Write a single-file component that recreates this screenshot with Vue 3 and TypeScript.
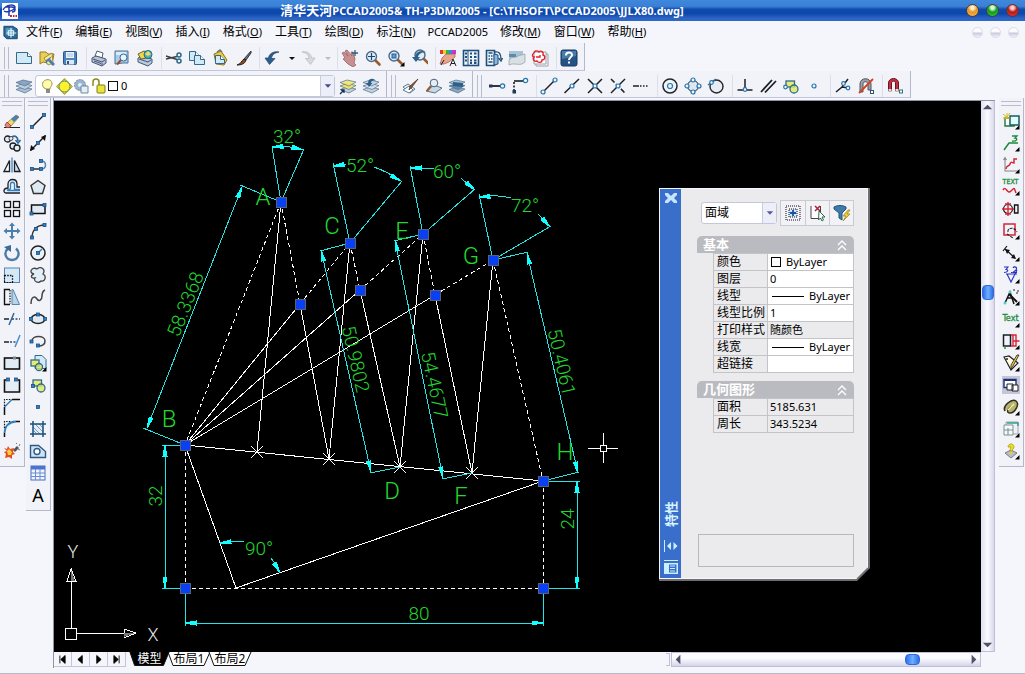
<script setup lang="ts">
import { ref } from 'vue'

interface Tool { id: string; label: string; sep?: boolean; narrow?: boolean }
type Pt = [number, number]

const menus = [
  { text: '文件', key: 'F' }, { text: '编辑', key: 'E' }, { text: '视图', key: 'V' },
  { text: '插入', key: 'I' }, { text: '格式', key: 'O' }, { text: '工具', key: 'T' },
  { text: '绘图', key: 'D' }, { text: '标注', key: 'N' }, { text: 'PCCAD2005', key: '' },
  { text: '修改', key: 'M' }, { text: '窗口', key: 'W' }, { text: '帮助', key: 'H' },
]

const node = (x: number, y: number) => `<rect x="${x - 1.5}" y="${y - 1.5}" width="3" height="3" fill="#2f7fc0" stroke="#1d4f86" stroke-width=".8"/>`
const ring = (x: number, y: number, r = 2) => `<circle cx="${x}" cy="${y}" r="${r}" fill="#eaf6ff" stroke="#2a74a8" stroke-width="1.2"/>`
const ln = (d: string, c = '#1b1f26', w = 1.5, extra = '') => `<path d="${d}" fill="none" stroke="${c}" stroke-width="${w}" ${extra}/>`
const corner = '<path d="M17.5 13v4.500h-4.500z" fill="#000"/>'
const lens = (x: number, y: number) => `<path d="M${x + 3} ${y + 3}l5 5" stroke="#9b5a2c" stroke-width="2.600" stroke-linecap="round"/><circle cx="${x}" cy="${y}" r="5" fill="#dcecf8" stroke="#4a6a88" stroke-width="1.400"/>`
const layers = (a: string, b: string, c: string) =>
  `<path d="M1 12.500l7-2.500 9 2-7 4z" fill="${a}" stroke="#51708e" stroke-width=".7"/><path d="M1 9l7-2.500 9 2-7 4z" fill="${b}" stroke="#51708e" stroke-width=".7"/><path d="M1 5.500l7-2.500 9 2-7 4z" fill="${c}" stroke="#51708e" stroke-width=".7"/>`
const page = (x: number, y: number, w: number, h: number) =>
  `<path d="M${x} ${y}h${w - 4}l4 4v${h - 4}h-${w}z" fill="#d3e9f6" stroke="#33698f"/><path d="M${x + w - 4} ${y}v4h4" fill="#fff" stroke="#33698f"/>`
const regionShape = '<rect x="4" y="4" width="8.500" height="6" fill="#e2ee72" stroke="#33698f" stroke-width="1.300"/><circle cx="12" cy="12" r="4" fill="#d8e860" fill-opacity=".8" stroke="#33698f" stroke-width="1.300"/>'
const word = (s: string, y: number, size: number) =>
  `<text x="8.500" y="${y}" text-anchor="middle" font-family="DejaVu Sans Condensed, sans-serif" font-size="${size}" fill="#1d8a3a" stroke="#1d8a3a" stroke-width=".3">${s}</text>`

const icons: Record<string, string> = {
  new: page(1.5, 3.5, 15, 11),
  open: '<path d="M2 3h6l2 2h6l-2 10-9-2-3 2z" fill="#e8cf58" stroke="#9b7b20"/><path d="M6 9l8-5 1 10-5 2z" fill="#f9eb96" stroke="#8a6d1c" stroke-width=".7"/><path d="M8 11l6-4-2 3 5 5-2 2-5-5-2 3z" fill="#4c7fae"/>',
  save: '<rect x="2.500" y="2.500" width="13" height="13" rx="1" fill="#4f83bb" stroke="#2d5588"/><rect x="5" y="3" width="8" height="6" fill="#e9f3fb"/><path d="M6 5h6M6 7h6" stroke="#8fb4d4" stroke-width=".8"/><rect x="5" y="11" width="8" height="4.500" fill="#dbe8f2"/><rect x="6" y="12" width="2" height="3" fill="#2d5588"/>',
  print: '<path d="M5 7l2-5 6 2-1 5z" fill="#fff" stroke="#4b5b77"/><path d="M2 9l4-2 10 3v4l-4 3-10-4z" fill="#b8c4da" stroke="#46556f"/><path d="M3 10l9 3 3-2M4 12l7 2.500" fill="none" stroke="#46556f"/><path d="M12 14v2.500" stroke="#46556f"/>',
  preview: '<path d="M2 2h13v12h-5l-8 1z" fill="#a7cdec" stroke="#4a7298"/><path d="M3 3h10v3h-10z" fill="#d9edfa"/><path d="M8 11l-4 4.500" stroke="#9b4a2c" stroke-width="2"/><circle cx="10.500" cy="8.500" r="3.500" fill="#e8f5fd" stroke="#3c6288"/>',
  publish: '<path d="M2 9l4-2 10 3v4l-4 3-10-4z" fill="#bac9de" stroke="#40577a"/><path d="M3 10l9 3 3-2" fill="none" stroke="#40577a"/><path d="M2 5l6-3 4 2-1 5-6 1z" fill="#f0d94e" stroke="#6b6320"/><circle cx="12" cy="5.500" r="4" fill="#5bb0b9" stroke="#206878"/><path d="M9 5l3-3 3 3-3 2z" fill="#eadf66"/>',
  cut: ln('M1 7l11 3.500M1 10l11-2.500', '#3b4148', 1.4) + '<circle cx="14" cy="6" r="2" fill="none" stroke="#2e6588" stroke-width="1.500"/><circle cx="14" cy="12" r="2" fill="none" stroke="#2e6588" stroke-width="1.500"/>',
  copy: page(1.5, 2.5, 10, 9) + page(6.500, 6.500, 10, 9),
  paste: '<path d="M3 5l7-3 6 9-3 5-8-1z" fill="#e9c93a" stroke="#8e731a"/><path d="M6 3l3-2 2 2" fill="none" stroke="#777" stroke-width="1.500"/>' + page(4.500, 6.500, 9, 8),
  brush: '<path d="M17 2l-7 8 2 1 5-7z" fill="#6b6f78" stroke="#2f3238"/><path d="M10 10l2 1c-1 4-5 5-9 5 4-1 4-4 7-6z" fill="#8b4a22" stroke="#2b1c12"/>',
  undo: '<path d="M16 3C10 2 6 5 5.500 9H2l4.500 6.500L12 9.500H8.500C9 6 11 4 16 3z" fill="#2d5f8b" stroke="#1d4468" stroke-width=".7"/>',
  redo: '<path d="M3 3c6-1 9 2 9.500 6H16l-4.500 6.500L6.500 9.500H10C9.500 6 8 4 3 3z" fill="#d6d9e0" stroke="#b3b7c2" stroke-width=".7"/>',
  down: '<path d="M6 8h6l-3 3z" fill="#111"/>',
  downg: '<path d="M6 8h6l-3 3z" fill="#b8bbc8"/>',
  pan: '<path d="M1 4l2-1 4 4-3-5 2-1 5 6-1-4 2 0 2 7-1 4 2 2-3 2-5-3-5-5 2-1z" fill="#c98e8e" stroke="#8b5a62" stroke-width=".7"/><path d="M14 1v6M11 4h6" stroke="#345d86" stroke-width="1.300"/>',
  zoom: lens(7.500, 7.500) + ln('M4 7.500h7M7.500 4v7', '#1c4470', 1.2),
  zoomwin: lens(7, 7) + '<rect x="5" y="5" width="4" height="4" fill="#5d9ccc" stroke="#2c6192"/>' + corner,
  zoomprev: lens(10, 6) + '<path d="M16 3C10 0 5 4 5 8H2l4 5 4-5H8c0-2 3-5 8-5z" fill="#2f6088"/>',
  props: '<path d="M1 1h3v4h-3z" fill="#e33"/><path d="M4 1h3v4h-3z" fill="#ec3"/><path d="M7 1h3v4h-3z" fill="#3b3"/><path d="M10 1h3v4h-3z" fill="#38e"/><path d="M13 1h4v4h-4z" fill="#c3c"/><path d="M3 9l4-4h9v3l-6 5-5 2H1z" fill="#e9a48e" stroke="#9c594c" stroke-width=".7"/><path d="M2 16l3-5M11 17l3-7 3 7M12 14.500h4" fill="none" stroke="#222"/>',
  design: '<rect x="1.500" y="1.500" width="15" height="15" fill="#eef6fc" stroke="#214f7c" stroke-width="1.600"/><path d="M6 2v14" stroke="#214f7c"/><path d="M3 4.500h2M3 8h2M3 11.500h2M8 4.500h2M12 4.500h2.500M8 8h2M12 8h2.500M8 11.500h2M12 11.500h2.500M8 14h2M12 14h2.500" stroke="#214f7c" stroke-width="1.800"/>',
  palette: '<path d="M1.500 1.500h8v15h-8z" fill="#eef6fc" stroke="#214f7c" stroke-width="1.600"/><path d="M9 5l4 1v9l-4 1z" fill="#8db6da" stroke="#214f7c"/><path d="M3.500 4h4M3.500 7h1.500M6 7h1.500M3.500 10h1.500M6 10h1.500M3.500 13h4" stroke="#214f7c" stroke-width="1.500"/>' + ln('M10 3c4-1 6 2 6 7M13.500 9l2.500 3 1.500-3', '#214f7c', 1.3),
  sheet: '<path d="M1 2h14v9l-8 2H1z" fill="#a9c3d6"/><path d="M1 5h7v3H1z" fill="#5e89ab"/><path d="M1 12c2-6 6-2 9-5 2-1 4-1 7-2v8c-5 5-10 0-16 3z" fill="#d8e0e4" stroke="#8c9ba6" stroke-width=".7"/>',
  markup: '<path d="M5 5h12v12H5z" fill="#f7f7fa" stroke="#9aa0ac"/><path d="M3 3h12v12H3z" fill="#fff" stroke="#9aa0ac"/>' + ln('M3 4c-3 2-1 4 0 4-2 3 1 5 3 4 1 2 5 2 5-1 3 0 4-4 1-5 1-3-2-5-4-3-2-2-5-1-5 1zM5 8h4V6', '#e0242c', 1.4),
  help: '<rect x="1" y="1" width="16" height="16" rx="2" fill="#245384" stroke="#173a60"/><path d="M2 2h14v5l-14 3z" fill="#4a7dac"/><path d="M6 6.500c0-4 6-4 6-.500 0 2.500-3 2-3 5M9 12.500v2" fill="none" stroke="#fff" stroke-width="2"/>',
  layers: layers('#a9bfd4', '#bccede', '#8ba5bf'),
  laycur: layers('#bfd0e0', '#efe164', '#efe680') + '<path d="M1 17l4-4M2 13h3v3" fill="none" stroke="#12305a" stroke-width="1.300"/>',
  layprev: layers('#bfd0e0', '#d5e0ea', '#c6d5e3') + '<path d="M14 4C11 0 6 2 6 6H4l3 4 3.500-4H9c0-2 2-3 5-2z" fill="#2f6088"/>',
  laymatch: '<path d="M1 10l5-3 7 5-5 4z" fill="#eaf2f8" stroke="#5c7b96"/><path d="M1 13l6-4 4 4-4 3z" fill="#fff" stroke="#5c7b96"/><path d="M16 2l-6 8-3 3 1-4z" fill="#8c5d38" stroke="#3c2b1e" stroke-width=".7"/>',
  layfind: '<path d="M1 14l8-6 8 3-7 5z" fill="#c6d7e5" stroke="#59768f"/><path d="M6 9l-4 5" stroke="#9b5a2c" stroke-width="2.200"/><circle cx="9" cy="6" r="3.800" fill="#e2eef8" stroke="#4a5f78"/>',
  laytool: layers('#8aa6c0', '#6189ad', '#a9c3da') + '<path d="M5 5l10 1v4l-10-1z" fill="#2f6088"/>',
  track: ln('M3 9h9', '#1b1f26', 1.8) + '<rect x="1" y="7.500" width="3.500" height="3" fill="#1d3b58"/>' + ring(14.500, 9, 2.2),
  from: ln('M3 4h10', '#1b1f26', 1.6) + ln('M3 5v9', '#1b1f26', 1.6, 'stroke-dasharray="2 1.500"') + '<rect x="1.500" y="13" width="3.500" height="3.500" fill="#1d3b58"/>' + ring(14.500, 3.500, 2.2),
  endp: ln('M3 15L15 3') + ring(3, 15) + ring(15, 3),
  midp: ln('M1.500 16L16 2') + ring(9, 9),
  inter: ln('M2 2l14 14M16 2L2 16') + ring(9, 9),
  appint: ln('M2 2l14 14', '#1b1f26', 1.5, 'stroke-dasharray="5 2"') + ln('M16 2L2 16') + ring(9, 9),
  exten: ln('M1 9h6') + ln('M8 9h9', '#1b1f26', 1.5, 'stroke-dasharray="1.500 1.500"'),
  center: '<circle cx="9" cy="9" r="7" fill="#eef3f7" stroke="#20262d" stroke-width="1.500"/>' + ring(9, 9, 2.5),
  quad: '<circle cx="9" cy="9" r="5.500" fill="#dbe7f2" stroke="#20262d"/>' + ring(9, 3) + ring(9, 15) + ring(3, 9) + ring(15, 9),
  tan: '<circle cx="9.500" cy="9.500" r="6.500" fill="#e7edf2" stroke="#20262d" stroke-width="1.400"/>' + ln('M1 8l8-6', '#2a74a8', 1.4) + ring(4.500, 5.500, 1.8),
  perp: ln('M9 2v9M1.500 13h15') + ring(9, 12.500, 1.8),
  para: ln('M2 15L13 3M6 15.500L17 4', '#1b1f26', 1.8),
  insert: regionShape + ring(3.500, 10, 1.8),
  nodep: ring(9, 9, 2),
  near: ln('M2 15l6-5 6-8M8 10l7 1') + ring(9.500, 6.500, 1.8) + ring(14, 11, 1.8),
  none: '<path d="M3 15V7c0-7 11-7 11 0v6h-3V7c0-3-5-3-5 0v8z" fill="#9a9ea8" stroke="#555"/>' + ln('M2 16L16 2', '#d04020', 1.8) + '<rect x="13.500" y="13.500" width="3" height="3" fill="#fff" stroke="#356"/>',
  osnap: '<path d="M2.500 14V6c0-6 10-6 10 0v8h-3V6c0-2.500-4-2.500-4 0v8z" fill="#c03040" stroke="#6e1420"/><path d="M2.500 12h3v2.500h-3zM9.500 12h3v2.500h-3z" fill="#ddd"/><rect x="13.500" y="13" width="3" height="3" fill="#fff" stroke="#2a7480"/>',
  erase: '<path d="M1 15.500h16" stroke="#222"/><path d="M4 11L13 3l3 2-8 9z" fill="#eddc6a" stroke="#8c7820" stroke-width=".8"/><path d="M8 7l5-4 3 2-5 5z" fill="#4e7fb0"/><path d="M4 10l4 4-2 1.500H3.500L2 13z" fill="#e8837e" stroke="#8c3b3b" stroke-width=".8"/>',
  dup: '<circle cx="4.500" cy="5" r="3" fill="#e4edf5" stroke="#1b1f26" stroke-width="1.300"/><circle cx="10" cy="12" r="3" fill="#e4edf5" stroke="#1b1f26" stroke-width="1.300"/><circle cx="14" cy="14" r="3" fill="#e4edf5" stroke="#1b1f26" stroke-width="1.300"/><circle cx="8" cy="4.500" r="2" fill="#e4edf5" stroke="#444"/>' + ln('M9 3c3-2 6 0 6 4M12.500 6l2.500 3 2.500-3', '#2f6799', 1.6),
  mirror: '<path d="M1 15.500h5.500v-11z" fill="#fff" stroke="#1b1f26" stroke-width="1.300"/><path d="M17 15.500h-5.500v-11z" fill="#cfe0ee" stroke="#1b1f26" stroke-width="1.300"/><path d="M9 1.500v15" stroke="#2f7fc0" stroke-width="1.200"/>',
  offset: ln('M17 15H3c-3 0-3-5 2-5V6c0-6 9-6 9 0v3h3', '#1b1f26', 1.3) + ln('M17 12.500H5c-1 0-1-1 1-1 2 0 1.500-2 1.500-5 0-3 4-3 4 0v5h5.500', '#2f7fc0', 1.3),
  array: '<g fill="#eef5fb" stroke="#111" stroke-width="1.300"><rect x="1.500" y="1.500" width="6" height="6"/><rect x="10.500" y="1.500" width="6" height="6"/><rect x="1.500" y="10.500" width="6" height="6"/><rect x="10.500" y="10.500" width="6" height="6"/></g>',
  move: '<path d="M9 .5l3 3.500h-2v4h4V6l3.500 3-3.500 3v-2h-4v4h2l-3 3.500L6 14h2v-4H4v2L.5 9 4 6v2h4V4H6z" fill="#4a7fae"/>',
  rotate: ln('M5 4.500C0 9 3 16 9 16s9-7 4-11.500', '#4c7ca4', 2.4) + '<path d="M1 3l7-2v7z" fill="#3c6c96"/>',
  scale: '<rect x="1.500" y="2" width="15" height="14.500" fill="#d5e8f6" stroke="#5586b0"/>' + ln('M1.500 9.500h8v7', '#111', 1.3, 'stroke-dasharray="1.500 1.200"') + ln('M1.500 9v8M1 16.500h9', '#111', 1.2, 'stroke-dasharray="1.500 1.200"'),
  stretch: '<path d="M9 1.500h1l6.500 15H9z" fill="#b9d3e8" stroke="#5586b0"/>' + ln('M7 1.500H1.500v15H7', '#111', 1.4) + ln('M7 2v14', '#111', 1.2, 'stroke-dasharray="1.500 1.200"'),
  trim: ln('M1 9h5') + ln('M9 9h8', '#2a4a70', 1.3, 'stroke-dasharray="2 1.500"') + ln('M6 15l5-12', '#2f6799', 1.5),
  extend: ln('M1 10h5') + ln('M7 10h6', '#2a4a70', 1.3, 'stroke-dasharray="2 1.500"') + ln('M12 15l5-12', '#4a8ccc', 1.5),
  breakpt: '<rect x="1.500" y="4" width="15" height="11" fill="#e0ecf5" stroke="#111" stroke-width="1.600"/><rect x="10" y="2.500" width="3" height="3" fill="#7a8796"/>',
  breakk: '<rect x="3" y="5" width="12" height="10" fill="#e3eef6"/>' + ln('M3 4H1.500v12h15V4H15', '#111', 1.6) + node(5, 3.500) + node(13, 3.500),
  chamfer: ln('M1.500 17V9M9 1.500h8', '#111', 1.5) + ln('M1.500 9l7.500-7.500', '#2f7fc0', 1.5) + ln('M1.500 8V1.500H8', '#111', 1.2, 'stroke-dasharray="1.500 1.200"'),
  fillet: ln('M1.500 17v-4M13 1.500h4', '#111', 1.5) + ln('M1.500 13C2 6 6 2 13 1.500', '#2f7fc0', 1.8) + ln('M1.500 8V1.500H8', '#111', 1.2, 'stroke-dasharray="1.500 1.200"'),
  explode: '<path d="M10 8l4-4 2 2-4 4z" fill="#555"/><path d="M1 6l3 1 1-3 2 3 4-1-1 4 2 2-3 1v4l-3-2-4 1 1-4-2-2 3-1z" fill="#e94b22"/><path d="M4 9l2-2 3 3-1 3-3 0z" fill="#f8d23c"/><path d="M13 2l1-1M16 4l1-2M15 7l2 1" stroke="#777"/>',
  line: ln('M3 15L15 3') + node(3, 15) + node(15, 3),
  xline: ln('M1.500 16.500L16.500 1.500') + '<path d="M1 17l1-6 4 4zM17 1l-1 6-4-4z" fill="#111"/>' + node(9, 9),
  pline: ln('M3 13h9', '#1b1f26', 1.4) + ln('M12 5c6 0 6 8 0 8', '#4c86b6', 1.5) + node(3, 13) + node(12, 5) + node(12, 13),
  polygon: '<path d="M9 2.500l7 5-2.500 8h-9l-2.500-8z" fill="#dfe9f2" stroke="#333" stroke-width="1.400"/>',
  rect: '<rect x="2.500" y="5" width="13.500" height="8.500" fill="#e0eaf4" stroke="#111" stroke-width="1.500"/>' + node(2.500, 13.500) + node(15.500, 5),
  arc: ln('M3 15.500C3 8 8 3 15.500 3', '#333', 1.4) + node(3, 15.500) + node(7, 7) + node(15.500, 3),
  circle: '<circle cx="9" cy="9" r="7" fill="#eaf2f9" stroke="#222" stroke-width="1.500"/>' + ln('M9 9l4-4', '#2f7fc0') + node(9, 9),
  revcloud: '<path d="M5 8C-1 7 3 0 8 3c4-3 9 0 6 5 4 2 2 8-2 7-3 3-8 0-6-3-4 1-5-3-1-4z" fill="#e2eef8" stroke="#444" stroke-width="1.300"/>',
  spline: ln('M2 16c0-8 4-8 6-5s5 1 5-3 1-5 3-6', '#444', 1.5),
  ellipse: '<ellipse cx="9" cy="9" rx="7" ry="4.500" fill="#dfe9f3" stroke="#222" stroke-width="1.400"/>' + node(2, 9) + node(16, 9) + node(9, 4.500),
  earc: ln('M3 9C3 3 16 3 16 9c0 4-4 5-7 5', '#444', 1.5) + node(2.500, 9.500) + node(9, 13.500),
  insblk: '<path d="M6 1.500h7l4 4v9H6z" fill="#d3e9f6" stroke="#33698f"/><rect x="2" y="6" width="8" height="6" fill="#e2ee72" stroke="#33698f" stroke-width="1.300"/><circle cx="10" cy="13" r="3.500" fill="#d8e860" fill-opacity=".8" stroke="#33698f" stroke-width="1.300"/>' + corner,
  block: regionShape + node(4, 10),
  point: node(9, 9),
  hatch: '<path d="M4 4h10v10H4z" fill="#e4eef6"/>' + ln('M4 7l7 7M4 10l4 4M6 4l8 8M10 4l4 4', '#5586b0', .8) + ln('M4 1v16M14 1v16M1 4h16M1 14h16', '#1d4f78', 1.5),
  region: '<path d="M1.500 3.500h8l7 6v6h-15z" fill="#cfe3f2" stroke="#2d5a88" stroke-width="1.400"/><circle cx="8" cy="9.500" r="3" fill="#fff" stroke="#2d5a88" stroke-width="1.400"/>',
  table: '<rect x="2" y="2" width="14" height="14" fill="#eff5ff" stroke="#4a6fc0"/><path d="M2 2h14v3.500H2z" fill="#4a74cf"/>' + ln('M2 9h14M2 12.500h14M6.500 5v11M11 5v11', '#6b8dd0', 1),
  r1: '<path d="M3 6h9v8H3z" fill="#fff" stroke="#1d7a3a" stroke-width="1.400"/><path d="M8 4h9v9H8z" fill="#dff" stroke="#1d5a5c" stroke-width="1.500"/><path d="M1 2l6 5M5 1v6M1 6h7M8 1L3 7" stroke="#d8b820"/>' + corner,
  r2: ln('M2 16l5-7h9', '#1d8a3a', 1.5) + ln('M10 2h5l-2 2c3 0 2 4-3 3', '#1d8a3a', 1.3) + corner,
  r3: ln('M3 2v13h13M1.500 4L3 1.500 4.500 4', '#888', 1.1) + ln('M4 13c0-4 3-2 4-5s2-1 4-1V3h3', '#d82436', 1.5) + corner,
  r4: word('TEXT', 6, 7) + ln('M1 12c3-5 4 5 8 1s3-3 5 2', '#d82436', 1.5) + corner,
  r5: '<circle cx="6" cy="9" r="4.500" fill="none" stroke="#111" stroke-width="1.200"/><path d="M12.500 5h3.500v8h-3.500z" fill="none" stroke="#111" stroke-width="1.300"/>' + ln('M0 9h12M6 2v14M3 4h6M3 14h6', '#d82436', 1.4),
  r6: '<rect x="2" y="2" width="11" height="11" fill="none" stroke="#d82436" stroke-width="1.500"/>' + ln('M6 10c-1-4 6-6 9 0M5 12l6 4', '#222', 1.1, 'stroke-dasharray="3 1"') + corner,
  r7: ln('M3 5l10 9M1 7l4-5', '#111', 1.2) + '<path d="M3 5l5 1-3 4zM14 15l-5-1 3-4z" fill="#111"/>' + corner,
  r8: ln('M4 8h11M5 8l4 8 6-12M2 1h4l-2 2.500c3 0 2 3-2 3M9 6.500h1M11 2c1-2 5-1 3 2l-3 2.500h4', '#2430c0', 1.1) + corner,
  r9: ln('M3 15l5-11 4 12M5 10h6', '#111', 1.5) + ln('M7 6l8 8', '#111', 2) + '<circle cx="3" cy="15" r="1.500" fill="#5cc"/><circle cx="8" cy="4" r="1.500" fill="#5cc"/><path d="M12 1v2M16 2v2M14 5h2" stroke="#222"/>' + corner,
  r10: word('Text', 11, 9) + corner,
  r11: ln('M1.500 3h7v11h-7z') + ln('M9 3h5v11H9M11 3v11M11 9h6.500', '#d82436', 1.4) + ln('M3 14v3', '#1d8a3a', 1.4) + corner,
  r12: '<path d="M2 3l5-1 9 7-7 7z" fill="#fffbe8" stroke="#222" stroke-width="1.200"/><path d="M17 1l-6 11-2 3 0-4 6-10z" fill="#e9c93a" stroke="#222" stroke-width=".8"/><circle cx="5" cy="5" r="1" fill="#222"/>' + corner,
  r13: '<rect x="0" y="0" width="18" height="18" fill="#c2c6da"/><path d="M2 3.500h12v8H2z" fill="#fff" stroke="#223070" stroke-width="1.400"/><path d="M5 8h6v6H5zM10 9h6v6h-6z" fill="#fff" stroke="#222"/>' + ln('M2 4h12', '#223070', 2),
  r14: '<path d="M3 13C0 8 10 0 14 3s-1 12-6 12c-3 0-4-3 2-7" fill="#b9b46c" stroke="#2d2d22" stroke-width="1.500"/><path d="M6 12l6-6" stroke="#f4f0b0" stroke-width="1.500"/>' + corner,
  r15: '<path d="M4 2h12v12H4z" fill="#eef2f4" stroke="#9aa4aa"/><path d="M2 5h9v10H2z" fill="#f8fafa" stroke="#7d9096"/>' + ln('M5 3h11v3', '#3a9c90', 1.5) + ln('M2 10h9M6 8v7', '#7d9096', 1.1) + corner,
  r16: '<path d="M3 11l6-3 6 3-6 5z" fill="#b7bcc8" stroke="#767c8c"/><path d="M6 5c0-4 6-4 6 0 0 2-2 2-2 4H8c0-3 1-3 1-4z" fill="#f0e020" stroke="#a89a10" stroke-width=".8"/><circle cx="9" cy="11" r="1.300" fill="#e6d820"/>' + corner,
  selall: '<rect x="2" y="2" width="14" height="14" fill="none" stroke="#111" stroke-dasharray="1 1"/><rect x="5" y="5" width="8" height="8" fill="#cfe6f8" stroke="#111" stroke-dasharray="1 1"/>' + ln('M9 6v6M6 9h6', '#1d4fa8', 1.8),
  selobj: '<path d="M2 2.500h9v12H2z" fill="#fff"/>' + ln('M2 2v12.500h12M11.500 2v6', '#444', 1) + ln('M6 2l5 5M11 2L6 7', '#b02040', 1.6) + '<path d="M10 7l6 6-3 0 1.500 3-1.500 1-1.500-3-2 2z" fill="#fff" stroke="#2a6a48"/>',
  filter: '<path d="M1 3c3-2 9-2 12 0v2L9 9v7l-3-2V9L1 5z" fill="#3d7ca8" stroke="#225478"/><path d="M15 6l-5 6h3l-3 5 7-7h-3l3-4z" fill="#f2cf38" stroke="#9a7a10" stroke-width=".7"/>',
}

const t = (id: string, label: string, sep = false): Tool => ({ id, label, sep })

const standard: Tool[] = [
  t('new', '新建'), t('open', '打开'), t('save', '保存', true),
  t('print', '打印'), t('preview', '打印预览'), t('publish', '发布', true),
  t('cut', '剪切'), t('copy', '复制'), t('paste', '粘贴'), t('brush', '特性匹配', true),
  t('undo', '放弃'), { id: 'down', label: '放弃列表', narrow: true }, t('redo', '重做'),
  { id: 'downg', label: '重做列表', narrow: true, sep: true },
  t('pan', '实时平移'), t('zoom', '实时缩放'), t('zoomwin', '窗口缩放'), t('zoomprev', '缩放上一个', true),
  t('props', '特性'), t('design', '设计中心'), t('palette', '工具选项板'), t('sheet', '图纸集管理器'), t('markup', '标记集管理器', true),
  t('help', '帮助'),
]
const layerTools = [t('laycur', '将对象的图层置为当前'), t('layprev', '上一个图层')]
const layerExtra = [t('laymatch', '图层匹配'), t('layfind', '图层漫游'), t('laytool', '图层状态')]
const snaps: Tool[] = [
  t('track', '临时追踪点'), t('from', '捕捉自', true),
  t('endp', '端点'), t('midp', '中点'), t('inter', '交点'), t('appint', '外观交点'), t('exten', '延长线', true),
  t('center', '圆心'), t('quad', '象限点'), t('tan', '切点', true),
  t('perp', '垂足'), t('para', '平行线'), t('insert', '插入点'), t('nodep', '节点', true),
  t('near', '最近点'), t('none', '无捕捉', true), t('osnap', '对象捕捉设置'),
]
const modifyTools = [
  t('erase', '删除'), t('dup', '复制对象'), t('mirror', '镜像'), t('offset', '偏移'), t('array', '阵列'), t('move', '移动'),
  t('rotate', '旋转'), t('scale', '缩放'), t('stretch', '拉伸'), t('trim', '修剪'), t('extend', '延伸'), t('breakpt', '打断于点'),
  t('breakk', '打断'), t('chamfer', '倒角'), t('fillet', '圆角'), t('explode', '分解'),
]
const drawTools = [
  t('line', '直线'), t('xline', '构造线'), t('pline', '多段线'), t('polygon', '正多边形'), t('rect', '矩形'), t('arc', '圆弧'),
  t('circle', '圆'), t('revcloud', '修订云线'), t('spline', '样条曲线'), t('ellipse', '椭圆'), t('earc', '椭圆弧'), t('insblk', '插入块'),
  t('block', '创建块'), t('point', '点'), t('hatch', '图案填充'), t('region', '面域'), t('table', '表格'), t('mtext', '多行文字'),
]
const cadTools = [
  t('r1', '图幅'), t('r2', '序号'), t('r3', '坐标'), t('r4', '文字'), t('r5', '轴孔'), t('r6', '视图'), t('r7', '标注'), t('r8', '粗糙度'),
  t('r9', '构造'), t('r10', '文本'), t('r11', '零件'), t('r12', '编辑'), t('r13', '图库'), t('r14', '附件'), t('r15', '图纸'), t('r16', '提示'),
]

const general = [
  { name: '颜色', value: 'ByLayer', kind: 'swatch' },
  { name: '图层', value: '0', kind: 'input' },
  { name: '线型', value: 'ByLayer', kind: 'line' },
  { name: '线型比例', value: '1', kind: 'input' },
  { name: '打印样式', value: '随颜色', kind: 'locked' },
  { name: '线宽', value: 'ByLayer', kind: 'line' },
  { name: '超链接', value: '', kind: 'input' },
]
const geometry = [
  { name: '面积', value: '5185.631', kind: 'locked' },
  { name: '周长', value: '343.5234', kind: 'locked' },
]
const groups = [{ title: '基本', rows: general }, { title: '几何图形', rows: geometry }]

/* Drawing geometry */
const A: Pt = [281, 202], C: Pt = [350, 243], E: Pt = [423, 234], G: Pt = [493, 260]
const P1: Pt = [300, 304], P2: Pt = [360, 290], P3: Pt = [435, 295]
const B: Pt = [185, 445], H: Pt = [543, 481], BL: Pt = [185, 588], BR: Pt = [543, 588], F: Pt = [236, 588]
const X1: Pt = [257, 452], X2: Pt = [329, 459], X3: Pt = [400, 467], X4: Pt = [472, 473]

const seg = (list: [Pt, Pt][]) => list.map(([p, q]) => `M${p[0]} ${p[1]}L${q[0]} ${q[1]}`).join('')
const solid = seg([[A, X1], [P1, X2], [C, X2], [P2, X3], [E, X3], [P3, X4], [G, X4], [B, P1], [B, P2], [B, P3], [B, H], [B, F], [F, H]])
const dashed = [[A, B], [A, P1], [P1, C], [C, P2], [P2, E], [E, P3], [P3, G], [G, H], [B, BL], [BL, BR], [H, BR]].map(s => seg([s as [Pt, Pt]]))
const grips = [A, C, E, G, P1, P2, P3, B, H, BL, BR]
const crosses = [X1, X2, X3, X4]

const extensions = seg([
  [A, [272, 147]], [A, [304, 149]], [A, [240, 185]], [B, [143, 428]],
  [C, [333, 163]], [C, [402, 181]], [C, [320, 251]], [X3, [370, 473]],
  [E, [410, 166]], [E, [475, 189]], [E, [394, 241]], [X4, [442, 479]],
  [G, [479, 194]], [G, [551, 226]], [G, [528, 252]], [H, [579, 472]],
  [H, [580, 481]], [BR, [580, 588]], [B, [162, 445]], [BL, [162, 588]],
  [BL, [185, 626]], [BR, [543, 626]],
])
const arcs = 'M272 147Q288 145 303 150M333 166L346 164M374 167Q388 172 401 181M410 168L434 168M461 178L474 190M479 197Q496 194 511 198M538 214L550 227M220 543Q232 541 244 542M271 558Q276 564 280 573'
const dims: [Pt, Pt][] = [
  [[242, 187], [147, 428]], [[321, 250], [371, 472]], [[395, 240], [443, 478]], [[527, 253], [578, 473]],
  [[577, 481], [577, 588]], [[165, 445], [165, 588]], [[185, 623], [543, 623]],
]
const arrow = (tip: Pt, from: Pt) => {
  const a = Math.atan2(from[1] - tip[1], from[0] - tip[0])
  const pt = (d: number) => `${tip[0] + 11 * Math.cos(a) + d * Math.sin(a)},${tip[1] + 11 * Math.sin(a) - d * Math.cos(a)}`
  return `${tip[0]},${tip[1]} ${pt(2)} ${pt(-2)}`
}
const arrows = [
  ...dims.flatMap(([p, q]) => [arrow(p, q), arrow(q, p)]),
  arrow([272, 147], [288, 146]), arrow([303, 150], [288, 146]), arrow([333, 166], [346, 164]), arrow([401, 181], [388, 174]),
  arrow([410, 168], [430, 168]), arrow([475, 190], [462, 179]), arrow([479, 197], [495, 196]), arrow([550, 227], [540, 216]),
  arrow([220, 543], [240, 541]), arrow([280, 573], [274, 562]),
]
const dimTexts = [
  { s: '32°', x: 287, y: 136, r: 0 }, { s: '52°', x: 360, y: 165, r: 0 }, { s: '60°', x: 447, y: 171, r: 0 }, { s: '72°', x: 525, y: 205, r: 0 },
  { s: '90°', x: 259, y: 548, r: 0 }, { s: '80', x: 419, y: 613, r: 0 }, { s: '24', x: 567, y: 519, r: -90 }, { s: '32', x: 155, y: 496, r: -90 },
  { s: '58.3368', x: 185, y: 304, r: -68 }, { s: '50.9802', x: 356, y: 359, r: 77 }, { s: '54.4677', x: 435, y: 385, r: 78 }, { s: '50.4061', x: 562, y: 362, r: 77 },
]
const points = [
  { s: 'A', x: 263, y: 196 }, { s: 'C', x: 332, y: 225 }, { s: 'E', x: 402, y: 230 }, { s: 'G', x: 471, y: 255 },
  { s: 'B', x: 169, y: 418 }, { s: 'H', x: 565, y: 451 }, { s: 'D', x: 392, y: 490 }, { s: 'F', x: 461, y: 495 },
]

const tabs = ['模型', '布局1', '布局2']
const current = ref('模型')
const navs = [
  { label: '第一个', d: 'M6 4v9M12 4v9l-5-4.500z' }, { label: '上一个', d: 'M11 4v9l-5-4.500z' },
  { label: '下一个', d: 'M7 4v9l5-4.500z' }, { label: '最后一个', d: 'M12 4v9M6 4v9l5-4.500z' },
]
</script>

<template>
  <div class="app">
    <header class="titlebar">
      <svg class="logo" viewBox="0 0 16 16" aria-hidden="true">
        <rect width="16" height="16" fill="#fff" />
        <path d="M1 7c3-6 12-6 12-3s-8 6-11 4M7 3v10M4 4h6M10 4c4 0 4 5 0 5" fill="none" stroke="#2038b0" stroke-width="1.500" />
        <path d="M8 13h2M11 13h1.500M13.500 13H15" stroke="#d02030" stroke-width="2" />
      </svg>
      <h1><span>清华天河</span>PCCAD2005&amp; TH-P3DM2005 - [C:\THSOFT\PCCAD2005\JJLX80.dwg]</h1>
      <div class="orbs">
        <button class="orb amber" aria-label="最小化"></button>
        <button class="orb green" aria-label="还原"></button>
        <button class="orb red" aria-label="关闭"></button>
      </div>
    </header>

    <nav class="menubar">
      <svg class="docicon" viewBox="0 0 18 16" aria-hidden="true">
        <path d="M1 1h10l5 3v11H4l-3-3z" fill="#2a6794" stroke="#173f66" />
        <path d="M3 3h8v8H3z" fill="#4e98c0" />
        <path d="M9 3v11M4 8.500h11M6 6v5h6V6z" fill="none" stroke="#eaf6ff" stroke-width="1.200" />
      </svg>
      <button v-for="m in menus" :key="m.text" class="menu" :class="{ latin: !m.key }">{{ m.text }}<span v-if="m.key" class="key">(<u>{{ m.key }}</u>)</span></button>
      <div class="orbs child">
        <button class="orb pale" aria-label="最小化窗口"></button>
        <button class="orb pale" aria-label="还原窗口"></button>
        <button class="orb pale" aria-label="关闭窗口"></button>
      </div>
    </nav>

    <div class="barrow">
      <div class="bar" role="toolbar" aria-label="标准">
        <i class="grip"></i>
        <button v-for="b in standard" :key="b.id" class="tool" :class="{ sep: b.sep, narrow: b.narrow }" :aria-label="b.label">
          <svg viewBox="0 0 18 18" v-html="icons[b.id]"></svg>
        </button>
      </div>
    </div>

    <div class="barrow">
      <div class="bar" role="toolbar" aria-label="图层">
        <i class="grip"></i>
        <button class="tool" aria-label="图层特性管理器"><svg viewBox="0 0 18 18" v-html="icons.layers"></svg></button>
        <div class="layerbox">
          <svg class="states" viewBox="0 0 80 18" aria-hidden="true">
            <path d="M6 11c-6-8 8-12 8-4 0 2-2 3-2 5H8z" fill="#fffcb0" stroke="#a09a40" />
            <path d="M8 13h4M8 15h4" stroke="#666" stroke-width="1.500" />
            <rect x="21" y="4" width="11" height="11" fill="#f6e42c" stroke="#b3a32a" transform="rotate(45 26.500 9.500)" />
            <circle cx="26.500" cy="9.500" r="5.500" fill="#fff02c" stroke="#4a8a88" />
            <circle cx="42" cy="8" r="5.500" fill="#9ab4cc" stroke="#6d8aa6" stroke-dasharray="2 1" />
            <circle cx="42" cy="8" r="2" fill="#e4eef6" />
            <path d="M43 9h7v7h-7z" fill="#e4eef6" stroke="#6d8aa6" />
            <path d="M55 9V5c0-4 6-4 6 0v4" fill="none" stroke="#8a8a20" stroke-width="1.500" />
            <rect x="59" y="8" width="8" height="8" rx="1" fill="#ece436" stroke="#7d7a1c" />
            <rect x="70.500" y="4.500" width="9" height="9" fill="#fff" stroke="#111" />
          </svg>
          <select aria-label="图层"><option>0</option></select>
          <svg class="caret" viewBox="0 0 14 20" aria-hidden="true"><path d="M4 8h7l-3.500 4z" fill="#4a4a86" /></svg>
        </div>
        <button v-for="b in layerTools" :key="b.id" class="tool" :aria-label="b.label"><svg viewBox="0 0 18 18" v-html="icons[b.id]"></svg></button>
      </div>
      <div class="bar" role="toolbar" aria-label="图层工具">
        <i class="grip"></i>
        <button v-for="b in layerExtra" :key="b.id" class="tool" :aria-label="b.label"><svg viewBox="0 0 18 18" v-html="icons[b.id]"></svg></button>
      </div>
      <div class="bar" role="toolbar" aria-label="对象捕捉">
        <i class="grip"></i>
        <button v-for="b in snaps" :key="b.id" class="tool" :class="{ sep: b.sep }" :aria-label="b.label">
          <svg viewBox="0 0 18 18" v-html="icons[b.id]"></svg>
        </button>
      </div>
    </div>

    <main class="work">
      <div v-for="(col, i) in [modifyTools, drawTools]" :key="i" class="column" role="toolbar" :aria-label="i ? '绘图' : '修改'">
        <i class="vgrip"></i>
        <button v-for="b in col" :key="b.id" class="tool" :aria-label="b.label">
          <span v-if="b.id === 'mtext'" class="glyph">A</span>
          <svg v-else viewBox="0 0 18 18" v-html="icons[b.id]"></svg>
        </button>
      </div>

      <section class="document">
        <div class="viewrow">
          <div class="canvas">
            <svg class="drawing" aria-label="JJLX80">
              <g transform="translate(-54 -101)">
                <g class="geo">
                  <path class="white" :d="solid" />
                  <path v-for="(d, i) in dashed" :key="i" class="white dash" :d="d" />
                  <path v-for="c in crosses" :key="c[0]" class="white" :d="`M${c[0] - 6} ${c[1] - 6}l12 12m0 -12l-12 12`" />
                  <path class="cyan" :d="extensions" />
                  <path class="cyan" :d="arcs" />
                  <line v-for="(l, i) in dims" :key="i" class="cyan" :x1="l[0][0]" :y1="l[0][1]" :x2="l[1][0]" :y2="l[1][1]" />
                  <polygon v-for="(a, i) in arrows" :key="i" class="tip" :points="a" />
                  <rect v-for="g in grips" :key="g.join()" class="gripbox" :x="g[0] - 5" :y="g[1] - 5" width="10" height="10" />
                  <path class="white" d="M65 628h11v11h-11zM71 628V568M76 633h60M67 581l4 -12l5 12zM124 629l12 4l-12 5z" />
                  <path class="shade" d="M71 581v-11l4 11zM124 633h11l-11 4z" />
                  <path class="white" d="M588 448h12M606 448h12M603 433v12M603 451v12M600 445h6v6h-6z" />
                </g>
                <text v-for="d in dimTexts" :key="d.s + d.x" class="dimtext" :transform="`translate(${d.x} ${d.y}) rotate(${d.r})`" y="7">{{ d.s }}</text>
                <text v-for="p in points" :key="p.s" class="label" :x="p.x" :y="p.y + 9">{{ p.s }}</text>
                <text class="axis" x="73" y="558">Y</text>
                <text class="axis" x="153" y="641">X</text>
              </g>
            </svg>

            <aside class="palette" aria-label="特性">
              <div class="sheet">
                <div class="strip">
                  <button class="plain" aria-label="关闭特性"><svg viewBox="0 0 14 14"><path d="M1 2h3l3 3 3-3h3v2l-3 3 3 3v2h-3l-3-3-3 3H1v-2l3-3-3-3z" fill="#c9e4ff" /></svg></button>
                  <span class="caption">特性</span>
                  <button class="plain" aria-label="自动隐藏"><svg viewBox="0 0 14 14"><path d="M0 1h1v12H0zM7 3v8L3 7zM9.500 3v8l4-4z" fill="#c9f0ff" /></svg></button>
                  <button class="plain" aria-label="特性菜单"><svg viewBox="0 0 14 14"><path d="M0 0h14v1H0zM0 3h14v11H0z" fill="#c9f0ff" /><path d="M5 4.500h7.500v8H5z" fill="#3a6ecb" /><path d="M6 6h5M6 8.500h5M6 11h5" stroke="#c9f0ff" /></svg></button>
                </div>
                <div class="props">
                  <div class="pick">
                    <div class="objbox">
                      <select aria-label="对象类型"><option>面域</option></select>
                      <svg class="caret" viewBox="0 0 14 20" aria-hidden="true"><path d="M4 8h7l-3.500 4z" fill="#5a5a96" /></svg>
                    </div>
                    <div class="trio">
                      <button aria-label="切换 PICKADD"><svg viewBox="0 0 18 18" v-html="icons.selall"></svg></button>
                      <button aria-label="选择对象"><svg viewBox="0 0 18 18" v-html="icons.selobj"></svg></button>
                      <button aria-label="快速选择"><svg viewBox="0 0 18 18" v-html="icons.filter"></svg></button>
                    </div>
                  </div>
                  <section v-for="g in groups" :key="g.title" class="group">
                    <h2>{{ g.title }}<button class="plain" :aria-label="'折叠' + g.title"><svg viewBox="0 0 12 12"><path d="M2 6l4-4 4 4M2 11l4-4 4 4" fill="none" stroke="#fff" stroke-width="1.300" /></svg></button></h2>
                    <table>
                      <tbody>
                        <tr v-for="r in g.rows" :key="r.name">
                          <th scope="row">{{ r.name }}</th>
                          <td :class="r.kind">
                            <input v-if="r.kind === 'input'" type="text" :value="r.value" :aria-label="r.name">
                            <span v-else class="cell"><i v-if="r.kind !== 'locked'"></i>{{ r.value }}</span>
                          </td>
                        </tr>
                      </tbody>
                    </table>
                  </section>
                  <div class="hint"></div>
                </div>
              </div>
            </aside>
          </div>
          <div class="vscroll">
            <button aria-label="向上滚动"><svg viewBox="0 0 14 14"><path d="M2 9h10L7 4z" fill="#505068" /></svg></button>
            <span class="lead"></span><i class="thumb"></i><span class="rest"></span>
            <button aria-label="向下滚动"><svg viewBox="0 0 14 14"><path d="M2 5h10l-5 5z" fill="#505068" /></svg></button>
          </div>
        </div>
        <div class="tabrow">
          <button v-for="n in navs" :key="n.label" class="nav" :aria-label="n.label"><svg viewBox="0 0 18 16"><path :d="n.d" fill="#000" stroke="#000" /></svg></button>
          <div class="tabs" role="tablist">
            <button v-for="s in tabs" :key="s" class="tab" role="tab" :aria-selected="current === s" :class="{ on: current === s }" @click="current = s">
              <svg viewBox="0 0 44 14" preserveAspectRatio="none" aria-hidden="true"><path d="M1 0l5 13.500h31l6-13.500" /></svg><span>{{ s }}</span>
            </button>
          </div>
          <i class="splitter"></i>
          <div class="hscroll">
            <button aria-label="向左滚动"><svg viewBox="0 0 14 14"><path d="M9 2v10L4 7z" fill="#505068" /></svg></button>
            <span class="lead"></span><i class="thumb"></i><span class="rest"></span>
            <button aria-label="向右滚动"><svg viewBox="0 0 14 14"><path d="M5 2v10l5-5z" fill="#505068" /></svg></button>
          </div>
        </div>
      </section>

      <div class="column right" role="toolbar" aria-label="PCCAD">
        <i class="vgrip"></i>
        <button v-for="b in cadTools" :key="b.id" class="tool" :aria-label="b.label">
          <svg viewBox="0 0 18 18" v-html="icons[b.id]"></svg>
        </button>
      </div>
    </main>
    <footer class="foot"></footer>
  </div>
</template>

<style>
body { margin: 0; background: #f4f6fc; }
</style>

<style scoped>
.app {
  display: flex;
  flex-direction: column;
  min-height: 100vh;
  overflow: hidden;
  background: #f4f6fc;
  color: #000;
  font: 12px/16px "Noto Sans", "Noto Sans CJK SC", sans-serif;
}
* { box-sizing: border-box; }
button { padding: 0; border: 0; background: none; color: inherit; font: inherit; }
svg { display: block; }

.titlebar {
  display: flex;
  align-items: center;
  height: 21px;
  padding: 0 6px 0 2px;
  background: linear-gradient(#3f88dc 0, #3a80d6 30%, #0f4aae 45%, #0c48aa 65%, #2a62c4 85%, #2f68c8 100%);
  color: #fff;
}
.logo { width: 16px; height: 16px; }
h1 { flex: 1; margin: 0; padding-right: 20px; text-align: center; font: bold 11px/20px "Noto Sans", "Noto Sans CJK SC", sans-serif; white-space: nowrap; }
h1 span { font-size: 13px; }
.orbs { display: flex; gap: 7px; }
.orb { width: 13px; height: 13px; border-radius: 50%; border: 1px solid #4a3c3c; }
.amber { background: radial-gradient(circle at 50% 25%, #fff2c8 0 15%, #e8922a 45%, #f8c050 100%); }
.green { background: radial-gradient(circle at 50% 25%, #d8ffc8 0 15%, #109a20 45%, #38d040 100%); }
.red { background: radial-gradient(circle at 50% 25%, #ffd0c8 0 15%, #b81818 45%, #e84040 100%); }
.child { margin-left: auto; }
.pale { width: 11px; height: 11px; border: 1px solid #dcdce8; background: linear-gradient(#fafaff 45%, #c8c8dc 55%, #f0f0fa); }

.menubar { display: flex; align-items: center; gap: 1px; height: 22px; padding: 0 6px 0 3px; }
.docicon { width: 16px; height: 15px; }
.menu { padding: 0 6px; white-space: nowrap; font-size: 12px; }
.menu.latin { padding: 0 5px; font-size: 11px; }
.key { font-size: 11px; }

.barrow { display: flex; height: 28px; }
.barrow + .barrow { height: 27px; }
.bar { display: flex; align-items: center; padding: 3px 4px 0 0; border-right: 1px solid #b4b8cc; border-bottom: 1px solid #c2c6d8; background: #f1f3f9; }
.grip { width: 5px; height: 22px; margin: 0 3px 0 4px; border-left: 1px solid #b9bccd; border-right: 1px solid #b9bccd; }
.tool { display: grid; place-items: center; width: 23px; height: 22px; }
.tool svg { width: 18px; height: 18px; }
.tool:hover { background: #dfe8f7; }
.tool.narrow { width: 13px; }
.tool.sep { box-sizing: content-box; padding-right: 5px; border-right: 1px solid #dcdfe9; }

.layerbox, .objbox { position: relative; display: flex; align-items: center; background: #fff; border: 1px solid #c3c7da; border-radius: 3px; }
.layerbox { width: 300px; height: 22px; padding-left: 2px; margin-right: 1px; }
.states { width: 80px; height: 18px; }
select { flex: 1; min-width: 0; height: 20px; margin: 0; padding: 0 0 0 3px; border: 0; outline: 0; appearance: none; background: none; color: #000; font: 11px/18px "Noto Sans", "Noto Sans CJK SC", sans-serif; }
.objbox select { font-size: 12px; }
.caret { position: absolute; right: 0; top: 0; width: 14px; height: 20px; border-left: 1px solid #c9cbe2; background: #eceef8; pointer-events: none; }

.work { flex: 1; display: flex; align-items: stretch; }
.column { align-self: flex-start; display: flex; flex-direction: column; align-items: center; width: 25px; margin-right: 1px; padding-bottom: 4px; border-right: 1px solid #b4b8cc; border-bottom: 1px solid #b4b8cc; background: #f1f3f9; }
.vgrip { width: 20px; height: 5px; margin: 3px 0 4px; border-top: 1px solid #b9bccd; border-bottom: 1px solid #b9bccd; }
.right { margin: 0 1px 0 4px; }
.glyph { font-size: 18px; line-height: 20px; }

.document { flex: 1; display: flex; flex-direction: column; min-width: 0; margin-left: 1px; padding-top: 2px; border-left: 1px solid #8f93a4; }
.viewrow { flex: 1; display: flex; border-top: 1px solid #8f93a4; }
.canvas { position: relative; flex: 1; min-width: 0; overflow: hidden; background: #000; }
.drawing { position: absolute; inset: 0; width: 100%; height: 100%; }
.geo { shape-rendering: crispEdges; }
.white { fill: none; stroke: #fff; }
.shade { fill: #777; }
.dash { stroke-dasharray: 4 3; }
.cyan { fill: none; stroke: #22e6e6; }
.tip { fill: #1ff; stroke: #1ff; stroke-width: 1; }
.gripbox { fill: #0a40f4; stroke: #56617a; }
.dimtext, .label, .axis { text-anchor: middle; font-family: Roboto, sans-serif; font-weight: 300; fill: #20d830; }
.dimtext { font-size: 19px; }
.label { font-size: 24px; }
.axis { font-size: 18px; fill: #e8e8e8; }

.vscroll, .hscroll { display: flex; border: 1px solid #bfc0d6; }
.vscroll { flex-direction: column; width: 14px; border-top: 0; border-left: 0; background: linear-gradient(90deg, #dfdff0, #fbfbff 50%, #d8d8ec); }
.vscroll button, .hscroll button { width: 13px; height: 13px; }
.vscroll button svg, .hscroll button svg { width: 13px; height: 13px; }
.thumb { border: 1px solid #3468d8; border-radius: 4px; background: linear-gradient(90deg, #2f6ee8, #6ab0ff, #2f6ee8); }
.vscroll .thumb { width: 12px; height: 15px; margin-left: 1px; }
.vscroll .lead { flex: 171; }
.vscroll .rest { flex: 337; }
.splitter { width: 4px; height: 13px; margin: 1px 1px 0 auto; border: 1px solid #bfc0d6; border-left: 0; }
.hscroll { width: 310px; height: 15px; margin-right: 14px; background: linear-gradient(#fbfbff, #fbfbff 40%, #d4d4ea); }
.hscroll .lead { flex: 219; }
.hscroll .thumb { width: 15px; height: 11px; margin-top: 1px; }
.hscroll .rest { flex: 47; }

.tabrow { display: flex; height: 15px; margin-bottom: 1px; }
.nav { width: 18px; height: 15px; border-right: 1px solid #c2c6d8; border-bottom: 1px solid #c2c6d8; }
.nav svg { width: 17px; height: 14px; }
.tabs { display: flex; margin-left: 3px; }
.tab { position: relative; width: 44px; height: 14px; margin-right: -3px; line-height: 14px; }
.tab svg { position: absolute; inset: 0; width: 100%; height: 100%; }
.tab path { fill: #fff; stroke: #111; }
.tab span { position: relative; }
.tab.on { z-index: 1; width: 41px; color: #fff; }
.tab.on path { fill: #000; }

.palette { position: absolute; top: 87px; right: 111px; width: 211px; height: 393px; background: #6d6e70; clip-path: polygon(0 0, 100% 0, 100% calc(100% - 13px), calc(100% - 13px) 100%, 0 100%); }
.sheet { display: flex; width: 209px; height: 391px; border: 1px solid #f4f8fc; background: #ebebed; clip-path: polygon(0 0, 100% 0, 100% calc(100% - 12px), calc(100% - 12px) 100%, 0 100%); }
.strip { display: flex; flex-direction: column; align-items: center; gap: 7px; width: 21px; padding: 2px 0 4px; background: #3a6ecb; }
.plain svg { width: 14px; height: 14px; }
.caption { margin-top: auto; margin-bottom: 5px; color: #d8f4ff; font-weight: bold; font-size: 13px; writing-mode: vertical-rl; text-orientation: sideways; transform: rotate(180deg); }
.props { flex: 1; display: flex; flex-direction: column; padding: 11px 13px 11px 16px; }
.pick { display: flex; align-items: center; justify-content: space-between; height: 26px; margin: 0 0 10px 4px; }
.objbox { width: 76px; height: 22px; }
.trio { display: flex; border: 1px solid #c9cad2; background: #f2f2f6; }
.trio button { display: grid; place-items: center; width: 24px; height: 24px; }
.trio button + button { border-left: 1px solid #c9cad2; }
.trio svg { width: 18px; height: 18px; }
.group { margin-bottom: 8px; }
h2 { display: flex; justify-content: space-between; align-items: center; height: 17px; margin: 0; padding: 0 6px; border-radius: 5px 5px 0 0; background: #babbc0; color: #fff; font-size: 13px; line-height: 17px; }
h2 .plain svg { width: 12px; height: 12px; }
table { width: 141px; margin-left: 16px; border-collapse: collapse; table-layout: fixed; }
tr { height: 17px; }
th, td { padding: 0 0 0 2px; border: 1px solid #c4c4c8; line-height: 16px; text-align: left; font-weight: normal; white-space: nowrap; }
th { width: 54px; padding-left: 3px; font-size: 12px; }
td { background: #fff; font-size: 11px; }
td.locked { background: #ebebed; }
td input { display: block; width: 100%; height: 16px; padding: 0; border: 0; outline: 0; background: none; font: 11px/16px "Noto Sans", sans-serif; }
.cell { display: flex; align-items: center; gap: 5px; height: 16px; }
.swatch .cell { padding-left: 1px; }
.swatch i { width: 10px; height: 10px; border: 1px solid #000; }
.line i { width: 32px; height: 1px; margin-left: 2px; background: #000; }
.hint { height: 33px; margin-top: auto; margin-left: 1px; border: 1px solid #b8b8bc; }

.foot { height: 6px; border-bottom: 1px solid #b8bac8; }
</style>
